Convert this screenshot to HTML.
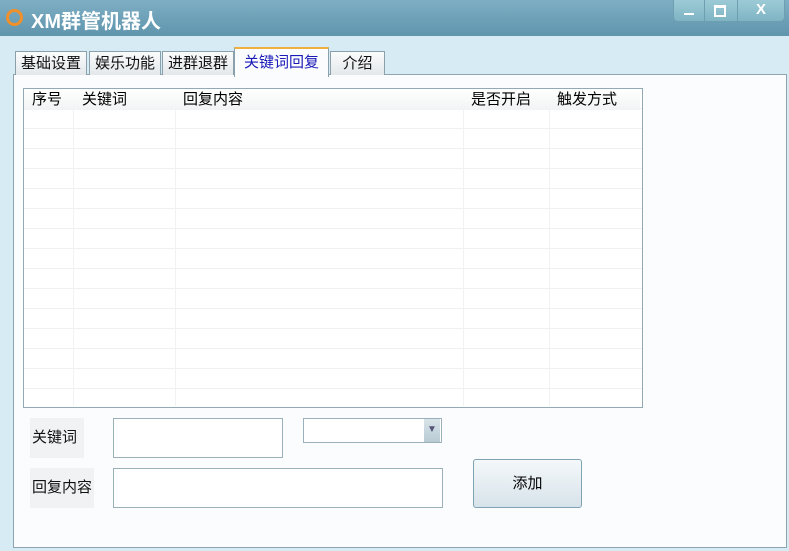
<!DOCTYPE html>
<html><head><meta charset="utf-8"><style>
body{margin:0;width:789px;height:551px;overflow:hidden;background:#d6ebf3;font-family:"Liberation Sans","Noto Sans CJK SC",sans-serif;position:relative}
.abs{position:absolute}
.title{left:0;top:0;width:789px;height:36px;background:linear-gradient(#7eaec4,#5f95ad)}
.tt{left:31px;top:5px;color:#fff;font-size:20px;font-weight:bold}
.tab{top:51px;height:23px;border:1px solid #8aa0ab;border-bottom:none;background:linear-gradient(#fbfbfb,#e4e8eb);font-size:15px;line-height:24px;text-align:center;color:#111}
.panel{left:13px;top:74px;width:772px;height:472px;background:#fbfcfe;border:1px solid #8fa4ae}
.list{left:23px;top:88px;width:618px;height:318px;border:1px solid #93aab5;background:#fff;
background-image:repeating-linear-gradient(#fff 0 19px,#eef0f2 19px 20px)}
.hdr{left:24px;top:89px;width:616px;height:21px;background:linear-gradient(#fff,#f2f3f4);font-size:15px;line-height:22px}
.hdr span{position:absolute;top:0}
.vl{top:110px;width:1px;height:296px;background:#f0f2f3}
.lbl{background:#f0f2f3;font-size:15px;color:#111;line-height:40px;padding-left:2px}
.inp{background:#fff;border:1px solid #9ab0bb}
</style></head><body>
<div class="abs title"></div>
<div class="abs" style="left:6px;top:9px;width:11px;height:11px;border:3px solid #f0902a;border-radius:50%"></div>
<div class="abs tt">XM群管机器人</div>
<div class="abs" style="left:673px;top:0;width:110px;height:21px;background:linear-gradient(#9ccbd6,#7fb4c4);border-radius:0 0 5px 5px;border:1px solid #6d9fb0;border-top:none"></div>
<div class="abs" style="left:704px;top:0;width:1px;height:21px;background:#6d9fb0"></div>
<div class="abs" style="left:737px;top:0;width:1px;height:21px;background:#6d9fb0"></div>
<div class="abs" style="left:684px;top:13px;width:10px;height:2px;background:#fff"></div>
<div class="abs" style="left:714px;top:5px;width:8px;height:7px;border:2px solid #fff;border-top-width:3px"></div>
<div class="abs" style="left:756px;top:1px;color:#fff;font-size:15px;font-weight:bold">X</div>
<div class="abs panel"></div>
<div class="abs tab" style="left:15px;width:70px">基础设置</div>
<div class="abs tab" style="left:89px;width:70px">娱乐功能</div>
<div class="abs tab" style="left:162px;width:70px">进群退群</div>
<div class="abs tab" style="left:234px;top:47px;height:28px;width:93px;background:#fbfcfe;color:#1a1ab8;border-top:2px solid #f0b040;line-height:28px">关键词回复</div>
<div class="abs tab" style="left:330px;width:53px">介绍</div>
<div class="abs list"></div>
<div class="abs hdr"><span style="left:8px">序号</span><span style="left:58px">关键词</span><span style="left:159px">回复内容</span><span style="left:447px">是否开启</span><span style="left:533px">触发方式</span></div>
<div class="abs vl" style="left:73px"></div><div class="abs vl" style="left:175px"></div><div class="abs vl" style="left:463px"></div><div class="abs vl" style="left:549px"></div>
<div class="abs lbl" style="left:30px;top:418px;width:52px;height:40px">关键词</div>
<div class="abs lbl" style="left:30px;top:468px;width:62px;height:40px">回复内容</div>
<div class="abs inp" style="left:113px;top:418px;width:168px;height:38px"></div>
<div class="abs inp" style="left:113px;top:468px;width:328px;height:38px"></div>
<div class="abs inp" style="left:303px;top:418px;width:137px;height:23px"></div>
<div class="abs" style="left:424px;top:419px;width:16px;height:23px;background:linear-gradient(#d8e4ea,#b8cad3);color:#557;font-size:10px;text-align:center;line-height:22px">▼</div>
<div class="abs" style="left:473px;top:459px;width:107px;height:47px;border:1px solid #7fa3b3;border-radius:3px;background:linear-gradient(#f4f8fa,#d7e3ea);font-size:15px;text-align:center;line-height:47px">添加</div>
</body></html>
